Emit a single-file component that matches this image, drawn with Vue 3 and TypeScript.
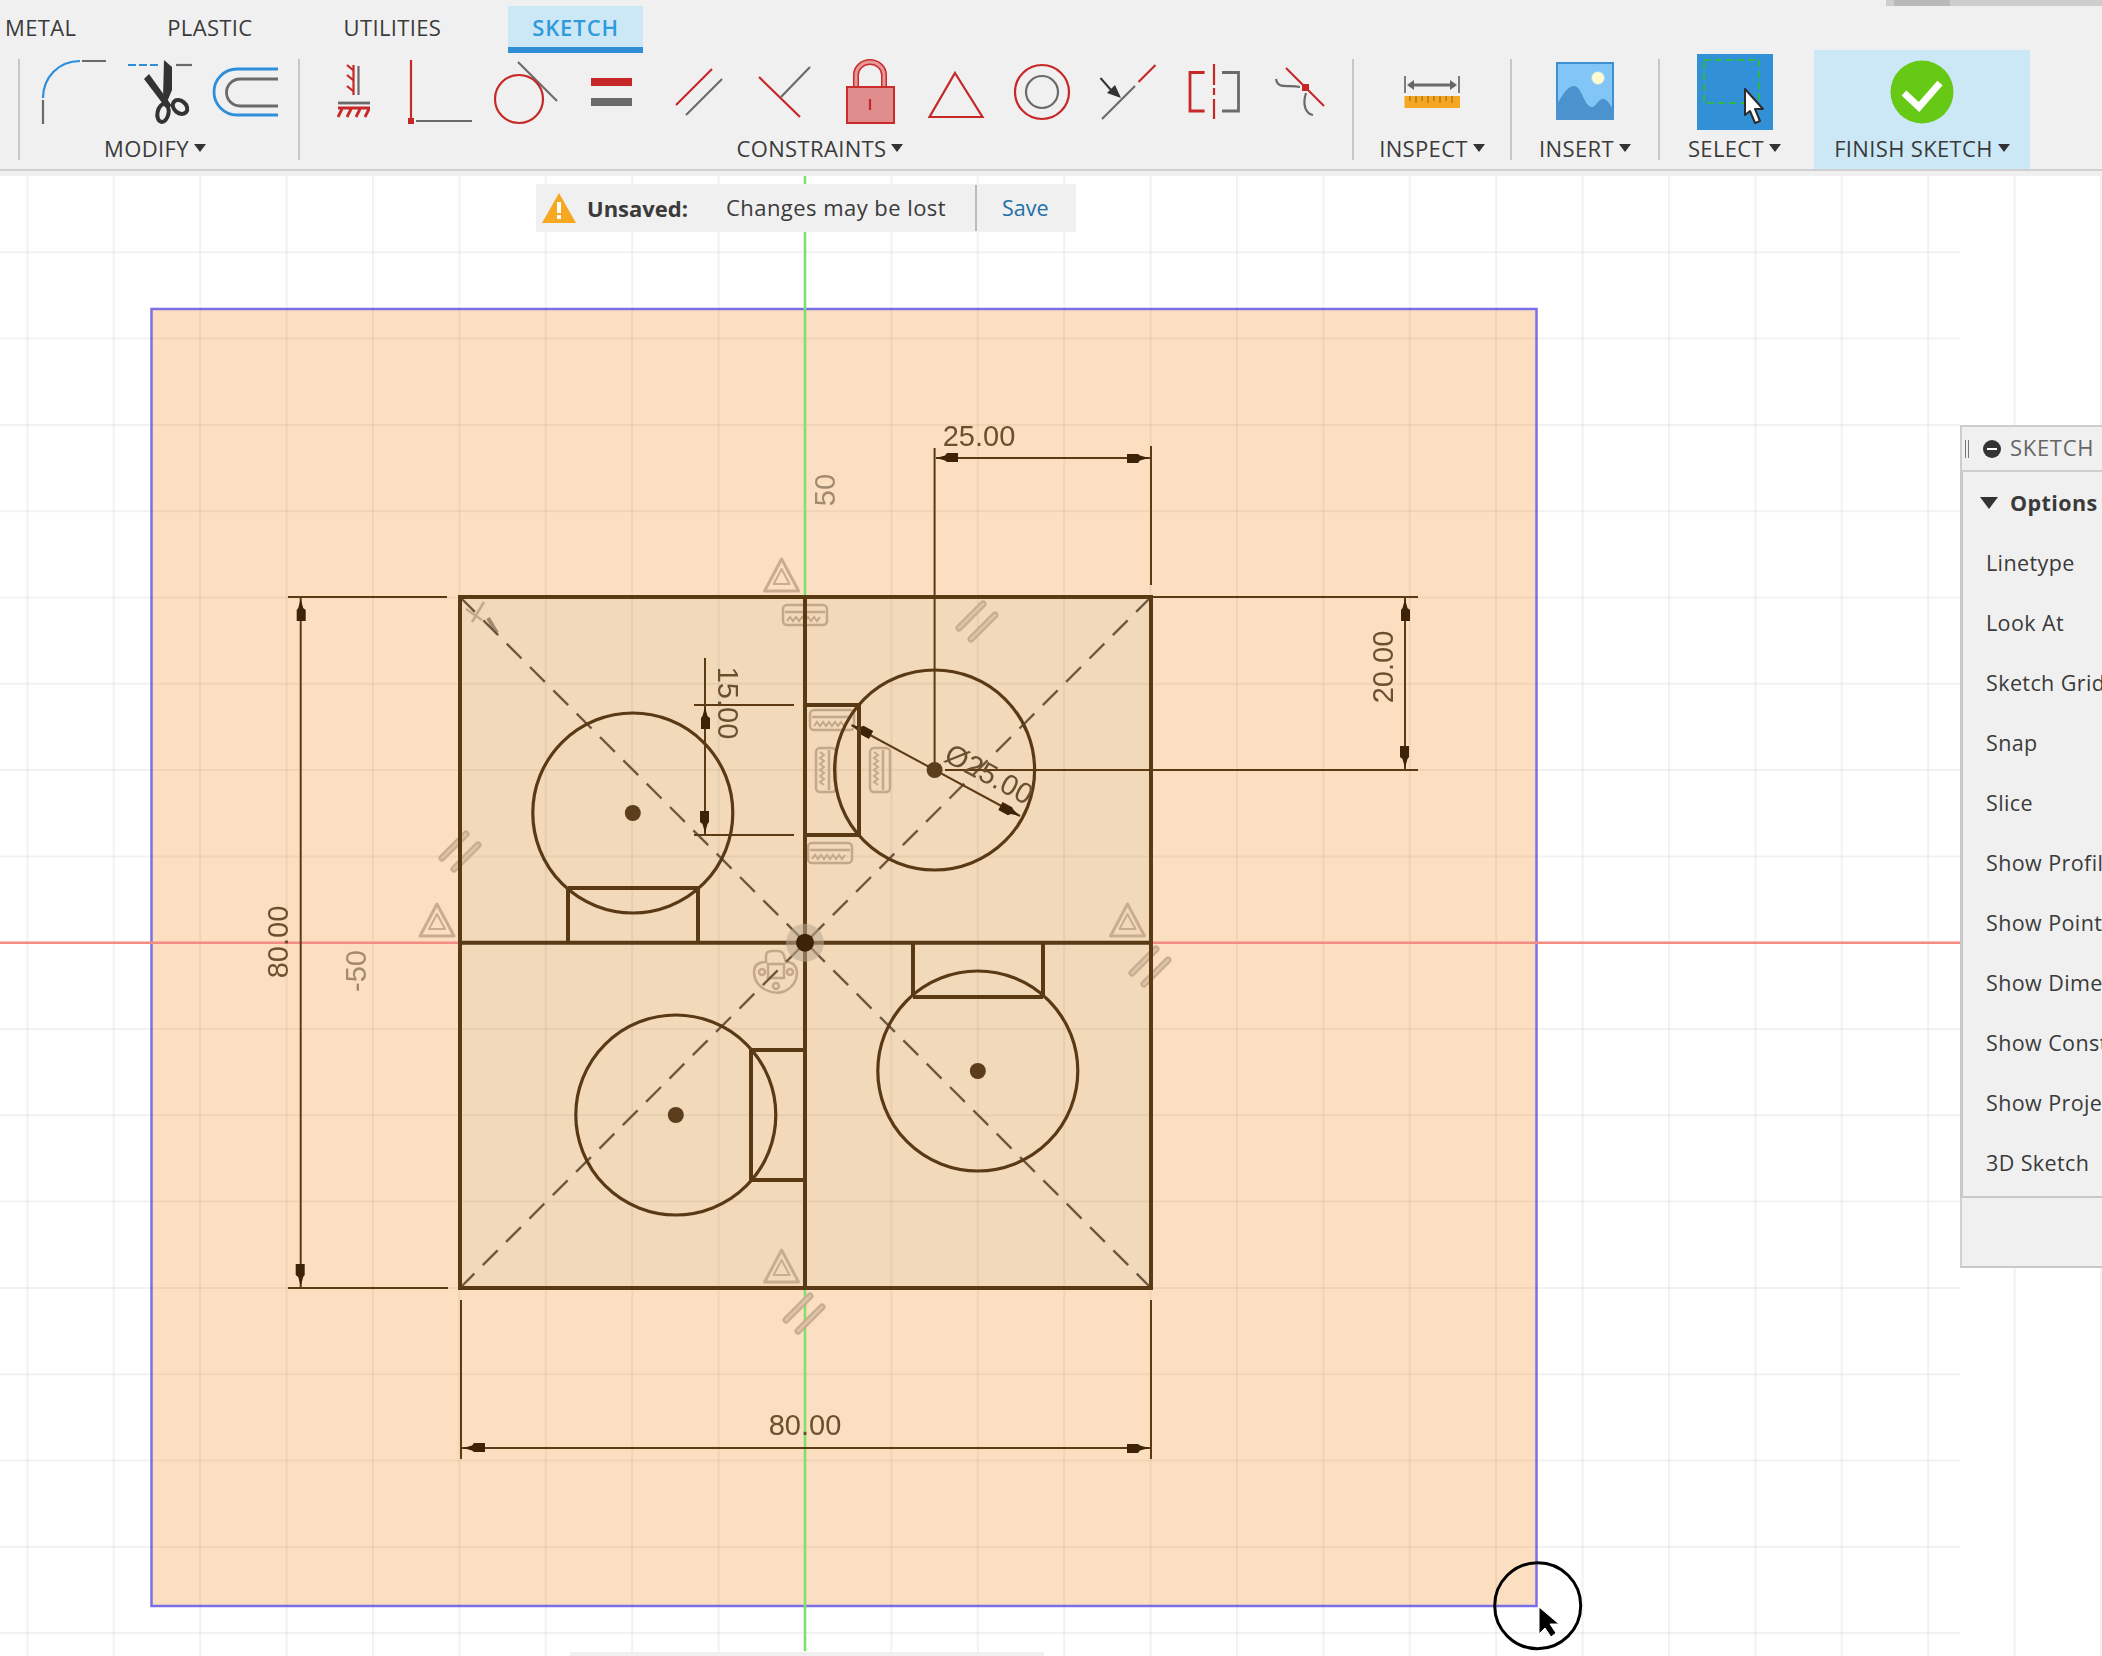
<script setup lang="ts">
interface Seg { x1: number; y1: number; x2: number; y2: number }
interface Mark { x: number; y: number; rot: number }
interface Label { text: string; x: number; y: number; rot: number }

const seg = (x1: number, y1: number, x2: number, y2: number): Seg => ({ x1, y1, x2, y2 })
const range = (from: number, to: number) => Array.from({ length: to - from + 1 }, (_, i) => from + i)

const tabs = ['METAL', 'PLASTIC', 'UTILITIES', 'SKETCH']

// grid is 10 mm, origin at 805 / 942.7 on the page
const gridX = range(-9, 15).map((n) => 805 + 86.4 * n)
const gridY = range(-8, 8).map((n) => 942.7 + 86.3 * n)

const outline: Seg[] = [
  seg(805, 597, 805, 1288),
  seg(460, 942.7, 1151, 942.7),
  // rectangles that sit on the circles
  seg(568, 942.7, 568, 888), seg(568, 888, 698, 888), seg(698, 888, 698, 942.7),
  seg(805, 705, 859, 705), seg(859, 705, 859, 835), seg(859, 835, 805, 835),
  seg(913, 942.7, 913, 997), seg(913, 997, 1043, 997), seg(1043, 997, 1043, 942.7),
  seg(805, 1050, 751, 1050), seg(751, 1050, 751, 1180), seg(751, 1180, 805, 1180)
]

const circles = [
  { x: 632.8, y: 813 },
  { x: 934.6, y: 770 },
  { x: 675.8, y: 1115 },
  { x: 977.8, y: 1071 }
]

const dimLines: Seg[] = [
  seg(934.6, 448, 934.6, 770), seg(1151, 446, 1151, 585), seg(936, 458, 1150, 458),
  seg(1151, 597, 1418, 597), seg(945, 770, 1418, 770), seg(1405, 598, 1405, 770),
  seg(705, 658, 705, 835), seg(694, 705, 794, 705), seg(694, 835, 794, 835),
  seg(288, 597, 447, 597), seg(288, 1288, 448, 1288), seg(300.7, 597, 300.7, 1288),
  seg(461, 1300, 461, 1459), seg(1151, 1300, 1151, 1459), seg(461, 1448, 1151, 1448),
  seg(851.5, 725, 1020, 816)
]

const arrows: Mark[] = [
  { x: 936, y: 458, rot: 0 }, { x: 1149, y: 458, rot: 180 },
  { x: 1405, y: 599, rot: 90 }, { x: 1405, y: 768, rot: -90 },
  { x: 705, y: 707, rot: 90 }, { x: 705, y: 833, rot: -90 },
  { x: 300.7, y: 599, rot: 90 }, { x: 300.7, y: 1286, rot: -90 },
  { x: 463, y: 1448, rot: 0 }, { x: 1149, y: 1448, rot: 180 },
  { x: 851.5, y: 725, rot: 28.4 }, { x: 1020, y: 816, rot: 208.4 }
]

const dimTexts: Label[] = [
  { text: '25.00', x: 979, y: 436, rot: 0 },
  { text: '20.00', x: 1383, y: 667, rot: -90 },
  { text: '15.00', x: 728, y: 703, rot: 90 },
  { text: '80.00', x: 277.5, y: 942, rot: -90 },
  { text: '80.00', x: 805, y: 1424.5, rot: 0 },
  { text: 'Ø25.00', x: 989, y: 774, rot: 28.4 }
]

const axisTexts: Label[] = [
  { text: '50', x: 825, y: 490, rot: -90 },
  { text: '-50', x: 356, y: 971, rot: -90 }
]

const triangles = [
  { x: 781.6, y: 576 }, { x: 437, y: 921 }, { x: 1127.5, y: 921 }, { x: 781.6, y: 1267 }
]
const parallels = [
  { x: 977, y: 621 }, { x: 460, y: 851 }, { x: 1150, y: 966 }, { x: 804, y: 1313 }
]
const fixes: Mark[] = [
  { x: 805, y: 615, rot: 0 }, { x: 832, y: 720, rot: 0 }, { x: 830, y: 853, rot: 0 },
  { x: 826, y: 770, rot: 90 }, { x: 880, y: 770, rot: 90 }
]

const paletteRows = [
  'Linetype', 'Look At', 'Sketch Grid', 'Snap', 'Slice', 'Show Profile', 'Show Points',
  'Show Dimensions', 'Show Constraints', 'Show Projected Geometry', '3D Sketch'
]
</script>

<template>
  <div class="app">
    <header class="toolbar">
      <div class="scrollbar"><span class="thumb"></span></div>
      <nav class="tabs">
        <span v-for="tab in tabs" :key="tab" class="tab" :class="{ active: tab === 'SKETCH' }">{{ tab }}</span>
      </nav>
      <div class="ribbon">
        <section class="panel modify">
          <div class="icons">
            <svg class="icon" viewBox="0 0 64 64">
              <path d="M1 38C1 18 16 1 38 1" class="blue" />
              <path d="M1 40V64M40 1H64" class="grey" />
            </svg>
            <svg class="icon" viewBox="0 0 64 64">
              <path d="M0 5H32" class="blue" stroke-dasharray="8 3" />
              <path d="M48 5H64" class="grey" />
              <path d="M36 0L44 7V30L39 42L35 38Z" fill="#333" />
              <path d="M16 19L21 14L44 46L38 48Z" fill="#333" />
              <ellipse cx="35" cy="53" rx="5.5" ry="9" fill="none" stroke="#333" stroke-width="4" transform="rotate(12 35 53)" />
              <ellipse cx="52" cy="47" rx="6" ry="8" fill="none" stroke="#333" stroke-width="4" transform="rotate(-50 52 47)" />
            </svg>
            <svg class="icon" viewBox="0 0 64 64">
              <path d="M64 9H23a23 23 0 0 0 0 46H64" class="blue thick" />
              <path d="M64 19H26a13.5 13.5 0 0 0 0 27H64" class="grey thick" />
            </svg>
          </div>
          <div class="label"><span>MODIFY</span><i class="caret"></i></div>
        </section>

        <section class="panel constraints">
          <div class="icons">
            <svg class="icon" viewBox="0 0 64 64">
              <path d="M36.5 6V35" class="grey" />
              <path d="M31.5 5V35M31 10L25 5M31 20L25 15M31 31L25 26" class="red" />
              <path d="M16 43H48" class="grey thick" />
              <path d="M16 48H48M20 49L16 57M29 49L25 57M38 49L34 57M47 49L43 57" class="red thick" />
            </svg>
            <svg class="icon" viewBox="0 0 64 64">
              <path d="M3 0V60" class="red" />
              <rect x="0" y="58" width="6" height="6" fill="#c62828" />
              <path d="M8 61H64" class="grey" />
            </svg>
            <svg class="icon" viewBox="0 0 64 64">
              <path d="M24 2L63 41" class="grey" />
              <circle cx="25" cy="39" r="24" class="red" />
            </svg>
            <svg class="icon" viewBox="0 0 64 64">
              <rect x="11" y="18" width="41" height="8" fill="#c62828" />
              <rect x="11" y="38" width="41" height="8" fill="#6a6a6a" />
            </svg>
            <svg class="icon" viewBox="0 0 64 64">
              <path d="M10 45L46 9" class="red" />
              <path d="M20 55L56 19" class="grey" />
            </svg>
            <svg class="icon" viewBox="0 0 64 64">
              <path d="M7 17L48 57" class="red" />
              <path d="M29 37L58 7" class="grey" />
            </svg>
            <svg class="icon" viewBox="0 0 64 64">
              <path d="M18 27V15a14 13 0 0 1 28 0V27" fill="none" stroke="#cc2b2b" stroke-width="6" />
              <path d="M18 27V15a14 13 0 0 1 28 0V27" fill="none" stroke="#e59a9a" stroke-width="3" />
              <rect x="9" y="27" width="47" height="36" fill="#e08d8d" stroke="#cc2b2b" stroke-width="2" />
              <path d="M32 39V50" class="red" />
            </svg>
            <svg class="icon" viewBox="0 0 64 64">
              <path d="M31 13L58.5 57H5.5Z" class="red" />
            </svg>
            <svg class="icon" viewBox="0 0 64 64">
              <circle cx="32" cy="32" r="27" class="red" />
              <circle cx="32" cy="32" r="16" class="grey" />
            </svg>
            <svg class="icon" viewBox="0 0 64 64">
              <path d="M6 59L39 26" class="grey" />
              <path d="M42.5 22L59.5 5" class="red" />
              <path d="M4.5 18L15 30" fill="none" stroke="#333" stroke-width="2" />
              <path d="M25 38L11 33L19 25Z" fill="#333" />
            </svg>
            <svg class="icon" viewBox="0 0 64 64">
              <path d="M22.6 12.5H8V51H22.6" class="red thick" />
              <path d="M40 12.5H56.5V51H40" class="grey thick" />
              <path d="M32 4V25M32 28V35M32 39V59" class="red" />
            </svg>
            <svg class="icon" viewBox="0 0 64 64">
              <path d="M18 8L56 46" class="red" />
              <path d="M8 19C10 30 20 24 32 27M38 33C34 45 38 54 45 55" class="grey" />
              <rect x="34" y="24" width="7" height="7" fill="#c62828" />
            </svg>
          </div>
          <div class="label"><span>CONSTRAINTS</span><i class="caret"></i></div>
        </section>

        <section class="panel inspect">
          <div class="icons">
            <svg class="icon" viewBox="0 0 64 64">
              <path d="M5 16V33M59 16V33" fill="none" stroke="#555" stroke-width="1.5" />
              <path d="M9 25H55" class="grey thick" />
              <path d="M14 20L7 25L14 30ZM50 20L57 25L50 30Z" fill="#666" />
              <rect x="4.5" y="36" width="55.5" height="12" fill="#f5a623" />
              <path d="M10 36V41M16 36V43M22 36V41M28 36V43M34 36V41M40 36V43M46 36V41M52 36V43" stroke="#a9751a" stroke-width="1.3" />
            </svg>
          </div>
          <div class="label"><span>INSPECT</span><i class="caret"></i></div>
        </section>

        <section class="panel insert">
          <div class="icons">
            <svg class="icon" viewBox="0 0 64 64">
              <rect x="4" y="3" width="56" height="56" fill="#82c6f8" stroke="#3d8fd0" stroke-width="2" />
              <ellipse cx="45" cy="18" rx="6.5" ry="6.5" fill="#fffbd0" stroke="#a8d4f0" />
              <path d="M3 46C9 36 14 26 21 26C29 26 31 47 39 47C43 47 45 39 50 39C55 39 58 47 61 50V60H3Z" fill="#4a93ce" />
            </svg>
          </div>
          <div class="label"><span>INSERT</span><i class="caret"></i></div>
        </section>

        <section class="panel select">
          <div class="icons">
            <svg class="icon large" viewBox="0 0 76 76">
              <rect width="76" height="76" fill="#3290d6" />
              <rect x="7" y="6" width="55" height="43" fill="none" stroke="#2fb84a" stroke-width="2" stroke-dasharray="7 4" />
              <path d="M48 35V61L53 57L58 69L63 67L58 55H66Z" fill="#fff" stroke="#2b2b2b" stroke-width="2" stroke-linejoin="round" />
            </svg>
          </div>
          <div class="label"><span>SELECT</span><i class="caret"></i></div>
        </section>

        <section class="panel finish">
          <div class="icons">
            <svg class="icon" viewBox="0 0 64 64">
              <circle cx="32" cy="32" r="31.5" fill="#66c916" />
              <path d="M14 33L29 47L50 23" fill="none" stroke="#fff" stroke-width="7" />
            </svg>
          </div>
          <div class="label"><span>FINISH SKETCH</span><i class="caret"></i></div>
        </section>
      </div>
    </header>

    <main class="canvas">
      <svg class="sketch" width="2102" height="1480" viewBox="0 176 2102 1480">
        <defs>
          <path id="arrow" d="M0 0L9 -2.5L11 -5L22 -5L22 4L11 4L9 2.5Z" fill="#3d2408" />
          <g id="tri" fill="none" stroke="#c9ad90" stroke-width="3" stroke-linejoin="round">
            <path d="M0 -17L17 15H-17Z" />
            <path d="M0 -7L8 8H-8Z" stroke-width="2" />
          </g>
          <g id="para" fill="none" stroke="#c9ad90" stroke-linecap="round">
            <path d="M-18 7L6 -17M-6 18L18 -6" stroke-width="7" />
            <path d="M-18 7L6 -17M-6 18L18 -6" stroke="#dcc4a6" stroke-width="2.5" />
          </g>
          <g id="fix" fill="none" stroke="#c4a88a">
            <rect x="-22" y="-10" width="44" height="20" rx="4" stroke-width="2.5" />
            <path d="M-20 -3H20" stroke-width="2.5" />
            <path d="M-18 6l3 -4l3 4l3 -4l3 4l3 -4l3 4l3 -4l3 4l3 -4l3 4l3 -4" stroke-width="2" />
          </g>
        </defs>

        <rect x="151.5" y="309" width="1385" height="1297" fill="#fcdfc0" stroke="#7b6fe8" stroke-width="2.5" />
        <rect x="460" y="597" width="691" height="691" fill="#f2d9ba" />

        <line v-for="x in gridX" :key="x" :x1="x" y1="176" :x2="x" y2="1656" class="grid" />
        <line v-for="y in gridY" :key="y" x1="0" :y1="y" x2="1960" :y2="y" class="grid" />

        <line x1="0" y1="942.7" x2="1960" y2="942.7" stroke="#f48c84" stroke-width="2.6" />
        <line x1="805" y1="176" x2="805" y2="1651" stroke="#7fe06f" stroke-width="2.6" />
        <rect x="570" y="1652" width="474" height="4" fill="#f0f0f0" />

        <use v-for="t in triangles" :key="`t${t.x}${t.y}`" href="#tri" :x="t.x" :y="t.y" />
        <use v-for="p in parallels" :key="`p${p.x}${p.y}`" href="#para" :x="p.x" :y="p.y" />
        <use
          v-for="f in fixes"
          :key="`f${f.x}${f.y}`"
          href="#fix"
          :transform="`translate(${f.x} ${f.y}) rotate(${f.rot})`"
        />
        <g fill="none" stroke="#c4a88a" stroke-width="2.5">
          <path d="M484 602L472 622M466 609L482 620" />
          <path d="M766 962V956Q766 951 772 951H778Q783 951 784 956L786 962Q796 962 797 972Q797 985 785 991Q776 995 766 990Q754 984 754 972Q754 962 766 962Z" />
          <circle cx="762" cy="972" r="3" />
          <circle cx="790" cy="972" r="3" />
          <circle cx="776" cy="986" r="3" />
          <path d="M768 964H784V978H768Z" />
        </g>
        <path d="M488 618L497 633" stroke="#a08a70" stroke-width="4" />

        <g class="dashes">
          <line x1="460" y1="597" x2="1151" y2="1288" />
          <line x1="1151" y1="597" x2="460" y2="1288" />
        </g>

        <g class="dims">
          <line v-for="(d, i) in dimLines" :key="i" :x1="d.x1" :y1="d.y1" :x2="d.x2" :y2="d.y2" />
        </g>
        <use
          v-for="(a, i) in arrows"
          :key="`a${i}`"
          href="#arrow"
          :transform="`translate(${a.x} ${a.y}) rotate(${a.rot})`"
        />

        <g class="outline">
          <rect x="460" y="597" width="691" height="691" />
          <line v-for="(l, i) in outline" :key="i" :x1="l.x1" :y1="l.y1" :x2="l.x2" :y2="l.y2" />
          <circle v-for="c in circles" :key="c.x" :cx="c.x" :cy="c.y" r="100" />
        </g>
        <circle v-for="c in circles" :key="`c${c.x}`" :cx="c.x" :cy="c.y" r="8" fill="#5c3d1c" />
        <circle cx="805" cy="942.7" r="19" fill="#bca78f" fill-opacity="0.55" />
        <circle cx="805" cy="942.7" r="9" fill="#3d2408" />

        <text
          v-for="(t, i) in dimTexts"
          :key="`d${i}`"
          class="dim-text"
          :transform="`translate(${t.x} ${t.y}) rotate(${t.rot})`"
        >{{ t.text }}</text>
        <text
          v-for="t in axisTexts"
          :key="t.text"
          class="axis-text"
          :transform="`translate(${t.x} ${t.y}) rotate(${t.rot})`"
        >{{ t.text }}</text>

        <circle cx="1537.7" cy="1605.7" r="43" fill="none" stroke="#000" stroke-width="3" />
        <path d="M1539 1607V1634L1545 1628L1551 1637L1556 1633L1550 1624L1559 1624Z" fill="#000" stroke="#fff" stroke-width="1" />
      </svg>

      <div class="message">
        <svg class="warn" width="34" height="30" viewBox="0 0 34 30">
          <path d="M17 0L34 30H0Z" fill="#f7a823" />
          <rect x="15" y="9" width="4" height="11" fill="#fff" />
          <rect x="15" y="22" width="4" height="4" fill="#fff" />
        </svg>
        <strong>Unsaved:</strong>
        <span class="note">Changes may be lost</span>
        <a class="save">Save</a>
      </div>

      <aside class="palette">
        <div class="palette-head">
          <span class="grip"></span>
          <span class="minus"></span>
          <span class="palette-title">SKETCH PALETTE</span>
        </div>
        <div class="palette-body">
          <div class="options"><i class="down"></i><strong>Options</strong></div>
          <div v-for="row in paletteRows" :key="row" class="row">{{ row }}</div>
        </div>
        <div class="palette-foot"></div>
      </aside>
    </main>
  </div>
</template>

<style scoped>
.app {
  width: 2102px;
  height: 1656px;
  overflow: hidden;
  position: relative;
  background: #fff;
  font-family: "Open Sans", "Liberation Sans", sans-serif;
  color: #3a3a3a;
}

.toolbar {
  height: 176px;
  box-sizing: border-box;
  background: #f0f0f0;
  position: relative;
}

.scrollbar {
  position: absolute;
  left: 1886px;
  right: 0;
  top: 0;
  height: 6px;
  background: #cdcdcd;
}

.thumb {
  display: block;
  margin-left: 8px;
  width: 56px;
  height: 6px;
  background: #b9b9b9;
}

.tabs {
  display: flex;
  gap: 43px;
  margin-left: -19px;
  padding-top: 6px;
  height: 47px;
}

.tab {
  height: 41px;
  padding: 0 24px;
  line-height: 43px;
  font-size: 22px;
  letter-spacing: 0.35px;
  border-bottom: 6px solid transparent;
}

.tab.active {
  background: #cce8f6;
  border-bottom-color: #2f8fd6;
  color: #2f9bdc;
  font-weight: 600;
  letter-spacing: 0.9px;
}

.ribbon {
  display: flex;
  align-items: flex-start;
  height: 117px;
  margin-left: 18px;
  position: relative;
}

.ribbon::after {
  content: "";
  position: absolute;
  left: -18px;
  width: 2102px;
  top: 116px;
  height: 2px;
  background: #d0d0d0;
}

.panel {
  box-sizing: border-box;
  height: 101px;
  margin-top: 6px;
  border-left: 2px solid #c8c8c8;
  display: flex;
  flex-direction: column;
  flex: none;
}

.modify { width: 280px; padding-left: 11px; }
.constraints { width: 1054px; padding-left: 11px; }
.inspect { width: 158px; }
.insert { width: 148px; }
.select { width: 156px; }

.finish {
  width: 216px;
  height: 119px;
  margin-top: -3px;
  padding-top: 9px;
  border-left: 0;
  background: #cce8f6;
}

.icons {
  display: flex;
  justify-content: center;
  align-items: center;
  height: 64px;
  margin-top: 1px;
}

.modify .icons,
.constraints .icons {
  justify-content: flex-start;
}

.icon {
  flex: none;
  width: 64px;
  height: 64px;
  overflow: visible;
}

.modify .icon,
.constraints .icon {
  margin: 0 11px;
}

.icon.large {
  width: 76px;
  height: 76px;
  margin: -6px 4px -6px 0;
}

.blue { fill: none; stroke: #2d8fdc; stroke-width: 2.2; }
.grey { fill: none; stroke: #6a6a6a; stroke-width: 2.2; }
.red { fill: none; stroke: #c62828; stroke-width: 2.2; }
.thick { stroke-width: 2.8; }

.label {
  display: flex;
  justify-content: center;
  align-items: center;
  gap: 5px;
  height: 24px;
  margin-top: 12px;
  font-size: 22px;
  letter-spacing: 0.35px;
  line-height: 24px;
  white-space: nowrap;
}

.modify .label {
  padding-right: 19px;
}

.constraints .label {
  padding-right: 23px;
}

.select .label {
  padding-right: 5px;
}

.caret {
  width: 0;
  height: 0;
  border-left: 6px solid transparent;
  border-right: 6px solid transparent;
  border-top: 8px solid #333;
}

.canvas {
  position: relative;
  height: 1480px;
}

.sketch {
  display: block;
  filter: blur(0.6px);
}

.grid {
  stroke: rgba(110, 80, 50, 0.075);
  stroke-width: 2;
}

.dashes line {
  stroke: #6e5840;
  stroke-width: 2.4;
  stroke-dasharray: 21 12;
}

.dims line {
  stroke: #5c3a14;
  stroke-width: 2;
}

.outline rect,
.outline line {
  fill: none;
  stroke: #5a3915;
  stroke-width: 4;
}

.outline circle {
  fill: none;
  stroke: #5a3915;
  stroke-width: 3.2;
}

.dim-text,
.axis-text {
  font-family: "Liberation Sans", Arial, sans-serif;
  font-size: 29px;
  text-anchor: middle;
  dominant-baseline: central;
}

.dim-text { fill: #6b5030; }
.axis-text { fill: #a08a70; }

.message {
  position: absolute;
  left: 536px;
  top: 8px;
  width: 540px;
  height: 48px;
  display: flex;
  align-items: center;
  background: #f0f0f0;
  font-size: 22px;
  line-height: 44px;
}

.warn {
  flex: none;
  margin: 0 11px 0 6px;
}

.message strong {
  width: 139px;
  font-weight: 700;
}

.note {
  width: 249px;
  height: 46px;
  line-height: 44px;
  letter-spacing: 0.45px;
  border-right: 2px solid #bbb;
}

.save {
  margin-left: 25px;
  font-size: 21.5px;
  color: #1d6fa8;
}

.palette {
  position: absolute;
  left: 1960px;
  top: 249px;
  width: 300px;
  font-size: 21.5px;
  letter-spacing: 0.4px;
}

.palette-head {
  box-sizing: border-box;
  height: 47px;
  display: flex;
  align-items: center;
  background: #f0f0f0;
  border: 2px solid #cdcdcd;
  border-right: 0;
  color: #666;
  font-size: 22px;
  letter-spacing: 0.7px;
  white-space: nowrap;
}

.palette-title {
  line-height: 40px;
  height: 43px;
  margin-left: 1px;
}

.grip {
  width: 4px;
  height: 18px;
  margin-left: 3px;
  border-left: 1px solid #777;
  border-right: 1px solid #777;
  box-sizing: border-box;
}

.minus {
  position: relative;
  width: 18px;
  height: 18px;
  margin: 0 8px 0 14px;
  border-radius: 50%;
  background: #333;
}

.minus::after {
  content: "";
  position: absolute;
  left: 4px;
  right: 4px;
  top: 8px;
  height: 2px;
  background: #fff;
}

.palette-body {
  box-sizing: border-box;
  height: 726px;
  background: #f0f0f0;
  border-left: 3px solid #c8c8c8;
  border-bottom: 2px solid #c8c8c8;
}

.options {
  display: flex;
  align-items: center;
  height: 61px;
  padding-left: 17px;
}

.down {
  width: 0;
  height: 0;
  margin-right: 12px;
  border-left: 9px solid transparent;
  border-right: 9px solid transparent;
  border-top: 12px solid #333;
}

.row {
  height: 60px;
  line-height: 60px;
  padding-left: 23px;
  white-space: nowrap;
}

.palette-foot {
  box-sizing: border-box;
  height: 70px;
  background: #f0f0f0;
  border-left: 2px solid #d0d0d0;
  border-bottom: 2px solid #c8c8c8;
}
</style>

<style>
html, body { margin: 0; overflow: hidden; }
</style>
